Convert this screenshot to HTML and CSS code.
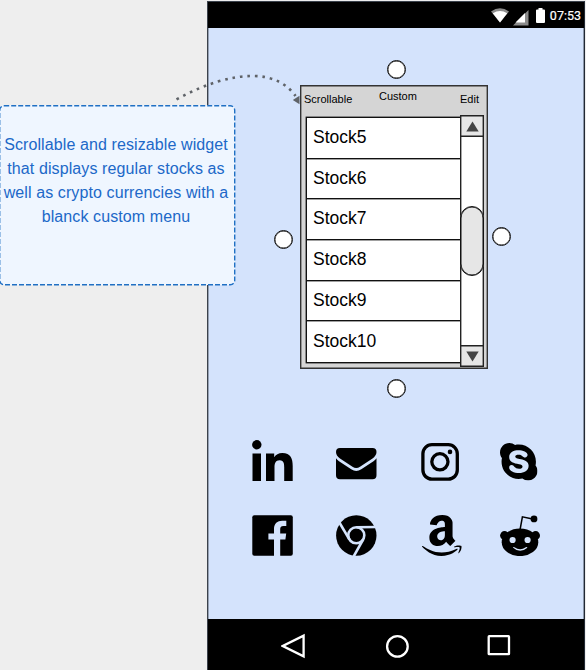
FILE: index.html
```html
<!DOCTYPE html>
<html lang="en">
<head>
<meta charset="utf-8">
<title>Stock widget wireframe</title>
<link rel="stylesheet" href="styles.css">
</head>
<body>
<main class="canvas">
  <section class="phone">
    <header class="status">
      <svg class="status-wifi" width="18" height="15" viewBox="0 0 18 15"><path d="M0 3.6Q9-3.2 18 3.6L9 14.6z" fill="#8c8c8c"/><path d="M1.8 5.2Q9 .8 16.200 5.200L9 14.6z" fill="#fff"/></svg>
      <svg class="status-signal" width="16" height="16" viewBox="0 0 16 16"><path d="M15.5 0v15.5H0z" fill="#8c8c8c"/><path d="M12 3v9.500H2.500z" fill="#fff"/></svg>
      <svg class="status-battery" width="9" height="15" viewBox="0 0 9 15"><path d="M2.5 0h4v1.5H8q1 0 1 1V14q0 1-1 1H1q-1 0-1-1V2.5q0-1 1-1h1.5z" fill="#fff"/></svg>
      <span class="time">07:53</span>
    </header>
    <div class="screen">
      <div class="widget">
        <div class="widget-menu">
          <span>Scrollable</span><span class="menu-custom">Custom</span><span>Edit</span>
        </div>
        <div class="widget-body">
          <ul class="stocks">
            <li>Stock5</li><li>Stock6</li><li>Stock7</li><li>Stock8</li><li>Stock9</li><li>Stock10</li>
          </ul>
          <div class="scrollbar">
            <div class="scroll-button"><svg width="13" height="11" viewBox="0 0 13 11"><path d="M6.5 0.5L12.7 10.5H.3z" fill="#444"/></svg></div>
            <div class="scroll-track"><div class="thumb"></div></div>
            <div class="scroll-button"><svg width="13" height="11" viewBox="0 0 13 11"><path d="M.3.5h12.4L6.5 10.5z" fill="#444"/></svg></div>
          </div>
        </div>
        <i class="handle handle-top"></i><i class="handle handle-right"></i><i class="handle handle-bottom"></i><i class="handle handle-left"></i>
      </div>
      <div class="apps">
        <svg width="41" height="41" viewBox="0 0 41 41"><circle cx="4.8" cy="4.8" r="4.7"/><path d="M.5 13.6H9V41H.5zM14 13.6h8.2v3.7c1.5-2.6 4.3-4.4 8.1-4.4 8.5 0 10.4 5.6 10.4 13V41h-8.5V27.6c0-3.3-.1-7.4-4.5-7.4s-5.2 3.5-5.2 7V41H14z"/></svg>
        <svg width="41" height="41" viewBox="0 0 41 41"><path d="M4 8h32.5q4 0 4 4c0 2.7-1.7 4.8-4 6.5L24 26.8q-3.8 2.5-7.5 0L4 18.500Q0 15.500 0 12 0 8 4 8z"/><path d="M0 18.300q1 1.500 3 2.900l12.200 8.100q5 3.300 10.100 0l12.200-8.100q2-1.400 3-2.900V35.300q0 4-4 4H4q-4 0-4-4z"/></svg>
        <svg width="41" height="41" viewBox="0 0 41 41"><rect x="1.900" y="4.700" width="34.400" height="34.400" rx="9" fill="none" stroke="#000" stroke-width="3.300"/><circle cx="18.900" cy="21.800" r="8.100" fill="none" stroke="#000" stroke-width="3.300"/><circle cx="29" cy="11.900" r="2.300"/></svg>
        <svg width="41" height="41" viewBox="0 0 41 41"><svg x="0" y="3" width="37.500" height="37.500" viewBox="0 32 448 448"><path d="M424.700 299.800c2.900-14 4.700-28.900 4.700-43.800 0-113.500-91.900-205.300-205.300-205.300-14.900 0-29.700 1.700-43.800 4.700C161.300 40.700 137.700 32 112 32 50.200 32 0 82.200 0 144c0 25.700 8.700 49.300 23.300 68.200-2.900 14-4.700 28.900-4.700 43.800 0 113.500 91.900 205.300 205.300 205.300 14.900 0 29.700-1.700 43.800-4.700 19 14.600 42.600 23.300 68.200 23.300 61.800 0 112-50.200 112-112 .1-25.600-8.600-49.200-23.200-68.100zm-194.600 91.500c-65.600 0-120.500-29.200-120.500-65 0-16 9-30.600 29.500-30.600 31.200 0 34.100 44.900 88.100 44.900 25.700 0 42.300-11.400 42.300-26.300 0-18.700-16-21.600-42-28-62.500-15.400-117.800-22-117.800-87.200 0-59.200 58.600-81.100 109.100-81.100 55.100 0 110.800 21.900 110.800 55.400 0 16.900-11.400 31.800-30.300 31.800-28.300 0-29.200-33.500-75-33.500-25.700 0-42 7-42 22.500 0 19.800 20.800 21.800 69.100 33 41.400 9.300 90.700 26.800 90.700 77.600 0 59.100-57.100 86.500-112 86.500z"/></svg></svg>
        <svg width="41" height="41" viewBox="0 0 41 41"><rect x=".3" y=".3" width="40.500" height="40.500" rx="2"/><path d="M22 41V24.600h-5.600v-6H22V14c0-5.600 3.400-8.300 8.200-8.300h4.100V11h-2.800c-2.800 0-3.300 1.300-3.300 3.200v4.400h6l-.8 6h-5.200V41z" class="cut"/></svg>
        <svg width="41" height="41" viewBox="0 0 41 41"><circle cx="20.300" cy="20.500" r="20.200"/><g class="cut-line"><circle cx="20.300" cy="20.300" r="8"/><path d="M20.300 12.300L41 12"/><path d="M20.300 12.300L41 12" transform="rotate(120 20.300 20.300)"/><path d="M20.300 12.300L41 12" transform="rotate(240 20.300 20.300)"/></g></svg>
        <svg width="41" height="41" viewBox="0 0 41 41"><svg x=".8" y="0" width="40" height="41" viewBox="7 32 433 448"><path d="M257.200 162.700c-48.700 1.800-169.500 15.500-169.500 117.500 0 109.500 138.300 114 183.500 43.200 6.500 10.200 35.400 37.500 45.300 46.800l56.800-56S341 288.900 341 261.400V114.300C341 89 316.500 32 228.700 32 140.700 32 94 87 94 136.300l73.500 6.800c16.300-49.500 54.200-49.500 54.200-49.500 40.700-.1 35.500 29.800 35.500 69.100zm0 86.800c0 80-84.200 68-84.200 17.200 0-47.200 50.500-56.700 84.200-57.800v40.600zm136 163.500c-7.700 10-70 67-174.500 67S34.200 408.500 9.700 379c-6.800-7.700 1-11.300 5.500-8.300C88.500 415.200 203 488.500 387.700 401c7.500-3.700 13.300 2 5.500 12zm39.800 2.200c-6.500 15.800-16 26.800-21.200 31-5.500 4.500-9.500 2.700-6.500-3.800s19.300-46.500 12.700-55c-6.500-8.300-37-4.300-48-3.200-10.800 1-13 2-14-.3-2.300-5.700 21.700-15.500 37.500-17.500 15.700-1.800 41-.8 46 5.700 3.700 5.100 0 27.100-6.500 43.100z"/></svg></svg>
        <svg width="41" height="41" viewBox="0 0 41 41"><circle cx="4.500" cy="20.500" r="4.400"/><circle cx="35.600" cy="20.500" r="4.400"/><ellipse cx="20" cy="27.300" rx="18.300" ry="13.800"/><path d="M20 15l2.400-13.200 9 2" fill="none" stroke="#000" stroke-width="1.500"/><circle cx="34" cy="3.900" r="3.400"/><g class="cut"><circle cx="12.600" cy="25" r="3.100"/><circle cx="27.600" cy="25" r="3.100"/><path d="M12.800 32.500q.8-1 1.600-.2 5.800 3.700 11.400 0 1.200-.6 1.600.4Q20 39 12.800 32.500z"/></g></svg>
      </div>
    </div>
    <footer class="nav">
      <svg width="26" height="26" viewBox="0 0 26 26"><path d="M22.600 2.600v20.800L1.800 13z"/></svg>
      <svg width="26" height="26" viewBox="0 0 26 26"><circle cx="13.400" cy="13.400" r="10.300"/></svg>
      <svg width="26" height="26" viewBox="0 0 26 26"><rect x="1.700" y="3.200" width="20.300" height="18" rx=".5"/></svg>
    </footer>
  </section>
  <aside class="note">
    <svg class="note-frame" width="237" height="181" viewBox="0 0 237 181"><rect x=".7" y=".8" width="235" height="179" rx="4.500"/></svg>
    <p>Scrollable and resizable widget that displays regular stocks as well as crypto currencies with a blanck custom menu</p>
  </aside>
  <svg class="arrow" width="136" height="44" viewBox="170 66 136 44"><path d="M176.500 99.300C207 83 231 76 253 76c20 0 34 8 42.500 20" fill="none" stroke="#5f6368" stroke-width="2.600" stroke-dasharray="2.600 4.900"/><path d="M292.800 100l6.700-4.300v8.600z" fill="#5f6368"/></svg>
</main>
</body>
</html>
```
FILE: styles.css
```css
* { box-sizing: border-box; }
body { margin: 0; background: #eee; font-family: "Liberation Sans", Arial, sans-serif; color: #000; }
svg { display: block; flex: none; }
.canvas { position: relative; width: 586px; height: 670px; overflow: hidden; padding: 1px 1px 0 207px; }
.phone { display: flex; flex-direction: column; height: 669px; border: 1px solid #3b424c; border-right-color: #222933; border-bottom: 0; background: #d4e3fc; box-shadow: inset .4px 0 #3b424c, inset -.4px 0 #222933; }
.status { display: flex; align-items: flex-start; justify-content: flex-end; height: 26px; padding: 6px 3px 0 0; background: #000; color: #fff; }
.status-signal { margin: 2px 0 0 4px; }
.status-battery { margin: 0 0 0 7px; }
.time { margin: 0 0 0 5px; font: 400 12.500px/15px Roboto, sans-serif; -webkit-text-stroke: .2px #fff; }
.screen { flex: 1; padding: 57px 0 0 92px; }
.widget { position: relative; display: flex; flex-direction: column; width: 188px; height: 284px; padding: 0 3px 1px 5px; border: 1px solid #333; background: #d5d5d5; box-shadow: inset 0 0 0 .4px #333; }
.widget-menu { display: grid; grid-template-columns: 75px 81px 20px; height: 29px; padding: 7px 0 0; margin-left: -2px; font-size: 11px; line-height: 12px; white-space: nowrap; }
.menu-custom { margin-top: -3px; }
.widget-body { display: flex; height: 252px; }
.stocks { display: grid; grid-template-rows: 41px 40px 41px 41px 40px 41px; width: 154px; height: 246px; margin: 2px 0 0; padding: 0; list-style: none; background: #fff; border: 1px solid #111; border-width: 1px 0 1px 1px; box-shadow: 0 0 0 .4px #111; font-size: 17.500px; }
.stocks li { display: flex; align-items: center; padding: 0 0 1px 6px; border-bottom: 1px solid #111; box-shadow: 0 .4px #111; }
.stocks li:last-child { border-bottom: 0; box-shadow: none; }
.scrollbar { position: relative; display: flex; flex-direction: column; width: 24px; height: 252px; border: 1px solid #222; box-shadow: inset 0 0 0 .4px #222; background: #fff; }
.scroll-button { display: flex; align-items: center; justify-content: center; height: 21px; background: #e6e6e6; border-bottom: 1px solid #222; box-shadow: inset 0 0 0 .4px #222; }
.scroll-button:last-child { border-top: 1px solid #222; border-bottom: 0; }
.scroll-track { flex: 1; padding-top: 69px; }
.thumb { width: 24px; height: 70px; margin-left: -1px; border: 1px solid #111; border-radius: 12px; background: #e6e6e6; box-shadow: inset 0 0 0 .5px #111; }
.handle { position: absolute; width: 19px; height: 19px; border: 1px solid #111; border-radius: 50%; background: #fff; box-shadow: inset 0 0 0 .4px #111; }
.handle-top { left: 86px; top: -26px; }
.handle-right { left: 191px; top: 141px; }
.handle-bottom { left: 86px; top: 293px; }
.handle-left { left: -27px; top: 144px; }
.apps { display: grid; grid-template-columns: 84px 85px 79px 41px; row-gap: 34px; margin: 71px 0 0 -48px; }
.cut { fill: #d4e3fc; }
.cut-line { fill: none; stroke: #d4e3fc; stroke-width: 2.600px; }
.nav { display: flex; gap: 77px; height: 51px; padding: 14px 0 0 73px; background: #000; }
.nav svg { fill: none; stroke: #fff; stroke-width: 2.300px; }
.note { position: absolute; left: -1px; top: 105px; width: 236px; height: 180px; padding: 28px 0 0; border-radius: 5px; background: #eff6ff; color: #2068c8; font-size: 16px; letter-spacing: .1px; line-height: 24px; text-align: center; }
.note p { margin: 0; padding: 0 5px 0 3px; }
.note-frame { position: absolute; left: 0; top: 0; fill: none; stroke: #2070c4; stroke-width: 1.400px; stroke-dasharray: 5 2; }
.arrow { position: absolute; left: 170px; top: 66px; }
```
